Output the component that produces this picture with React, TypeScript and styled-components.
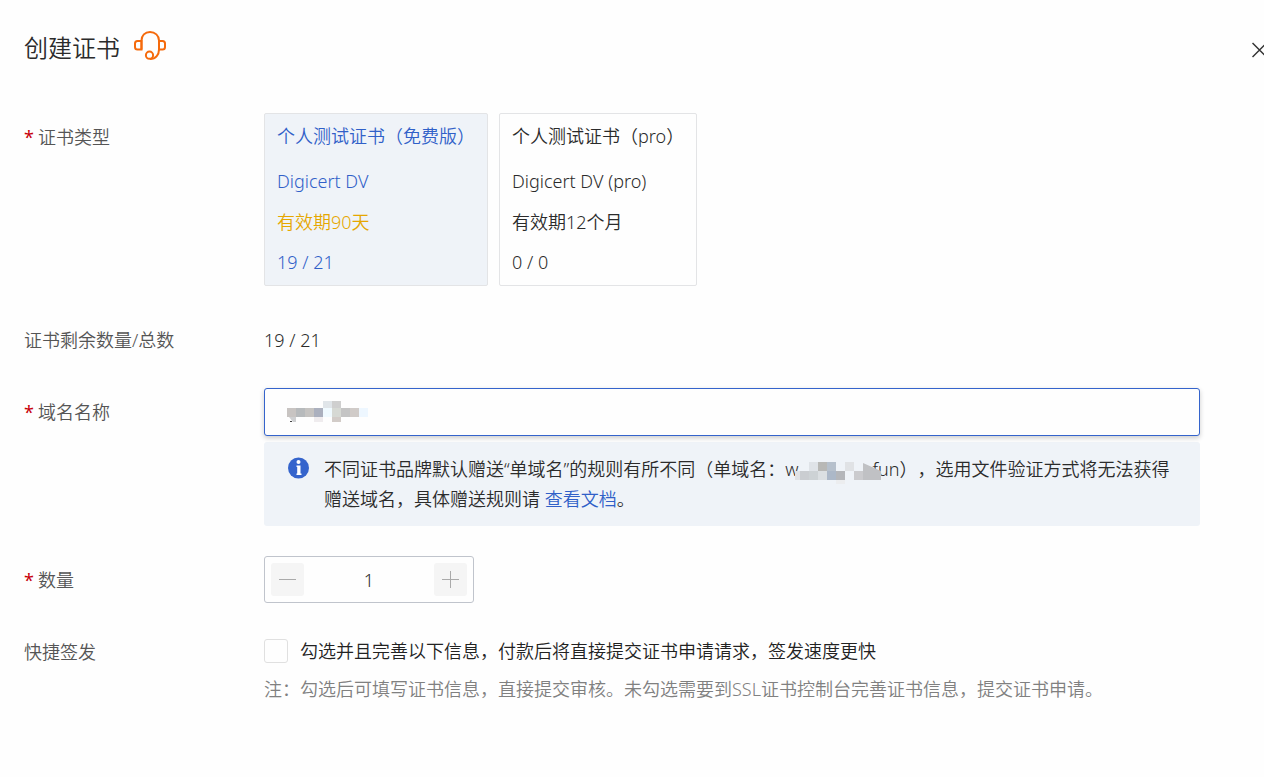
import React, { useState } from 'react';
import styled, { createGlobalStyle } from 'styled-components';

const GlobalStyle = createGlobalStyle`
  *, *::before, *::after { box-sizing: border-box; }
  body {
    margin: 0;
    background: #fefefe;
    color: #2b2b2b;
    font-family: "Noto Sans", "Noto Sans CJK SC", sans-serif;
    font-size: 18px;
    line-height: 30px;
    text-spacing-trim: space-all;
    overflow-x: hidden;
  }
  button, input { font: inherit; color: inherit; }
`;

const Drawer = styled.main`
  padding: 30px 0 64px 24px;
  font-weight: 350;
`;

const Header = styled.header`
  display: flex;
  align-items: center;
  gap: 13px;
  height: 36px;
  margin-bottom: 47px;
`;

const Title = styled.h1`
  margin: 0;
  font-size: 24px;
  font-weight: 350;
  line-height: 36px;
`;

const IconButton = styled.button`
  display: flex;
  padding: 0;
  border: 0;
  background: none;
  cursor: pointer;
`;

const SupportButton = styled(IconButton)`
  padding-bottom: 4px;
`;

const CloseButton = styled(IconButton)`
  width: 12px;
  margin-left: auto;
  padding-top: 4px;
  overflow: hidden;
  svg { flex: none; }
`;

const Form = styled.form`
  display: flex;
  flex-direction: column;
  padding-right: 64px;
`;

const Row = styled.div<{ $gap?: number }>`
  display: grid;
  grid-template-columns: 240px minmax(0, 1fr);
  align-items: start;
  margin-bottom: ${(p) => p.$gap ?? 30}px;
`;

const Label = styled.label<{ $top?: number }>`
  display: flex;
  gap: 4px;
  padding-top: ${(p) => p.$top ?? 0}px;
  color: #555;
`;

const Required = styled.span`
  color: #c8000a;
  font-weight: 400;
`;

const Cards = styled.div`
  display: flex;
  flex-wrap: wrap;
  gap: 11px;
`;

const Card = styled.button<{ $selected?: boolean }>`
  display: flex;
  flex-direction: column;
  gap: 10px;
  min-width: 197px;
  padding: 7px 12px 8px;
  border: 1px solid #e3e4e6;
  border-radius: 2px;
  background: ${(p) => (p.$selected ? '#eff3f8' : '#fefefe')};
  color: ${(p) => (p.$selected ? '#3060c8' : '#2b2b2b')};
  font-weight: 350;
  text-align: left;
  cursor: pointer;
`;

const CardTitle = styled.span`
  margin-bottom: 5px;
`;

const Validity = styled.span<{ $highlight?: boolean }>`
  margin-top: 1px;
  color: ${(p) => (p.$highlight ? '#e6a700' : 'inherit')};
`;

const DomainBox = styled.div`
  position: relative;
  height: 48px;
`;

const DomainInput = styled.input`
  display: block;
  width: 100%;
  height: 48px;
  padding: 0 22px;
  border: 1px solid #3564cc;
  border-radius: 3px;
  background: #fefefe;
  box-shadow: 0 2px 5px rgba(0, 0, 0, 0.2);
  outline: none;
`;

const DomainMask = styled.svg`
  position: absolute;
  top: 13px;
  left: 23px;
  pointer-events: none;
`;

const Notice = styled.div`
  display: flex;
  gap: 14px;
  margin-top: 6px;
  padding: 12px 24px;
  border-radius: 3px;
  background: #eff3f8;
  svg { flex: none; }
  p { margin: 0; }
`;

const InlineMask = styled.svg`
  position: relative;
  height: 30px;
  margin: 0 -9px 0 -3px;
  vertical-align: top;
`;

const DocLink = styled.a`
  color: #3060c8;
  text-decoration: none;
`;

const Stepper = styled.div`
  display: flex;
  align-items: center;
  width: 210px;
  height: 47px;
  padding: 0 6px;
  border: 1px solid #c0c4cc;
  border-radius: 3px;
`;

const StepButton = styled.button`
  display: flex;
  align-items: center;
  justify-content: center;
  flex: none;
  width: 33px;
  height: 33px;
  padding: 0;
  border: 0;
  border-radius: 3px;
  background: #f5f5f5;
  cursor: pointer;
`;

const StepInput = styled.input`
  flex: 1;
  min-width: 0;
  padding: 0;
  border: 0;
  background: none;
  text-align: center;
  outline: none;
`;

const CheckLabel = styled.label`
  display: flex;
  align-items: center;
  gap: 12px;
  color: #222;
`;

const Checkbox = styled.input`
  appearance: none;
  width: 24px;
  height: 24px;
  margin: 0;
  border: 1px solid #e0e0e0;
  border-radius: 3px;
  background: #fefefe;
  &:checked { background: #3564cc; }
`;

const Note = styled.p`
  margin: 8px 0 0;
  color: #808080;
`;

type Cell = [x: number, y: number, w: number, h: number, fill: string];

const domainCells: Cell[] = [
  [36, 0, 9, 7, '#e0e5e9'], [45, 0, 9, 7, '#cfcfcf'],
  [0, 7, 9, 9, '#c8c4c2'], [9, 7, 9, 9, '#b7babc'], [18, 7, 9, 9, '#c5c3c1'],
  [27, 7, 9, 9, '#abb0be'], [36, 7, 9, 9, '#f0faff'], [45, 7, 9, 9, '#d6d9d4'],
  [54, 7, 9, 9, '#c4c4c4'], [63, 7, 9, 9, '#d0cbc8'], [72, 7, 9, 9, '#eef7ff'],
  [27, 16, 9, 5, '#efecee'], [45, 16, 9, 5, '#d2ccc8'],
];

const siteCells: Cell[] = [
  [5, 8, 63, 18, '#eff3f8'],
  [14, 8, 9, 9, '#dfe3e8'], [23, 8, 9, 9, '#b8b8b6'], [32, 8, 9, 9, '#b6c0cc'],
  [50, 8, 9, 9, '#e0e2e5'],
  [0, 17, 5, 9, '#e0e2e5'], [5, 17, 9, 9, '#cacdd1'], [14, 17, 9, 9, '#cdd2d5'],
  [23, 17, 9, 9, '#dbdfe2'], [32, 17, 9, 9, '#acb8c8'], [41, 17, 9, 9, '#b4b6ba'],
  [59, 17, 9, 9, '#cbcbce'], [68, 17, 18, 9, '#c0c1c4'], [41, 26, 9, 4, '#ecedef'],
];

const Cells = ({ cells }: { cells: Cell[] }) => (
  <>
    {cells.map(([x, y, w, h, fill]) => (
      <rect key={`${x}-${y}-${w}`} x={x} y={y} width={w} height={h} fill={fill} shapeRendering="crispEdges" />
    ))}
  </>
);

const Star = () => <Required aria-hidden="true">*</Required>;

export default function App() {
  const [type, setType] = useState('free');
  const [count, setCount] = useState(1);

  return (
    <>
      <GlobalStyle />
      <Drawer>
        <Header>
          <Title>创建证书</Title>
          <SupportButton type="button" aria-label="客服">
            <svg width="34" height="34" viewBox="0 0 34 34" fill="none" stroke="#f56a0c" strokeWidth="2">
              <path d="M8.500 20.500V11.500C8.500 6.500 12 3 17 3s9 3.500 9 8.500v9c0 5-3 9.500-9 9.500" />
              <path d="M8.500 12H4.500C2.800 12 2 13 2 14.500v3.500c0 1.500.8 2.500 2.500 2.500h4z" />
              <path d="M26 12h3.500c1.700 0 2.500 1 2.500 2.500v3.500c0 1.500-.8 2.500-2.500 2.500H26z" />
              <circle cx="16.500" cy="26.200" r="3.600" />
            </svg>
          </SupportButton>
          <CloseButton type="button" aria-label="关闭">
            <svg width="15" height="16" viewBox="0 0 15 16" fill="none" stroke="#333" strokeWidth="1.500">
              <path d="M.5 1l14 14M14.500 1l-14 14" />
            </svg>
          </CloseButton>
        </Header>

        <Form onSubmit={(e) => e.preventDefault()}>
          <Row $gap={39}>
            <Label as="div" $top={9}><Star />证书类型</Label>
            <Cards>
              <Card type="button" $selected={type === 'free'} onClick={() => setType('free')}>
                <CardTitle>个人测试证书（免费版）</CardTitle>
                <span>Digicert DV</span>
                <Validity $highlight>有效期90天</Validity>
                <span>19 / 21</span>
              </Card>
              <Card type="button" $selected={type === 'pro'} onClick={() => setType('pro')}>
                <CardTitle>个人测试证书（pro）</CardTitle>
                <span>Digicert DV (pro)</span>
                <Validity>有效期12个月</Validity>
                <span>0 / 0</span>
              </Card>
            </Cards>
          </Row>

          <Row $gap={33}>
            <Label as="div">证书剩余数量/总数</Label>
            <span>19 / 21</span>
          </Row>

          <Row>
            <Label htmlFor="domain" $top={9}><Star />域名名称</Label>
            <div>
              <DomainBox>
                <DomainInput id="domain" type="text" />
                <DomainMask width="81" height="21" viewBox="0 0 81 21" aria-hidden="true">
                  <Cells cells={domainCells} />
                  <path d="M2 16h7v5H6z" fill="#cfd0d2" />
                  <path d="M3 20h2v1H3z" fill="#444" />
                </DomainMask>
              </DomainBox>
              <Notice>
                <svg width="22" height="30" viewBox="0 0 22 30" aria-hidden="true">
                  <circle cx="10.500" cy="14" r="10.500" fill="#3564cc" />
                  <circle cx="10.500" cy="8" r="2" fill="#fff" />
                  <path d="M8.500 11.500h4v8h1V21h-5v-1.500h.7V13h-.7z" fill="#fff" />
                </svg>
                <p>
                  不同证书品牌默认赠送“单域名”的规则有所不同（单域名：w
                  <InlineMask width="86" viewBox="0 0 86 30" aria-hidden="true">
                    <Cells cells={siteCells} />
                    <path d="M68 9l18 8H68z" fill="#c0c1c4" />
                  </InlineMask>
                  fun），选用文件验证方式将无法获得赠送域名，具体赠送规则请 <DocLink href="#docs">查看文档</DocLink>。
                </p>
              </Notice>
            </div>
          </Row>

          <Row $gap={33}>
            <Label htmlFor="count" $top={9}><Star />数量</Label>
            <Stepper>
              <StepButton type="button" aria-label="减少" onClick={() => setCount(Math.max(1, count - 1))}>
                <svg width="17" height="17" stroke="#aaa"><path d="M0 8.500h17" /></svg>
              </StepButton>
              <StepInput
                id="count"
                type="text"
                inputMode="numeric"
                value={count}
                onChange={(e) => setCount(Number(e.target.value) || 1)}
              />
              <StepButton type="button" aria-label="增加" onClick={() => setCount(count + 1)}>
                <svg width="17" height="17" stroke="#aaa"><path d="M0 8.500h17M8.500 0v17" /></svg>
              </StepButton>
            </Stepper>
          </Row>

          <Row $gap={0}>
            <Label as="div" $top={1}>快捷签发</Label>
            <div>
              <CheckLabel>
                <Checkbox type="checkbox" />
                勾选并且完善以下信息，付款后将直接提交证书申请请求，签发速度更快
              </CheckLabel>
              <Note>注：勾选后可填写证书信息，直接提交审核。未勾选需要到SSL证书控制台完善证书信息，提交证书申请。</Note>
            </div>
          </Row>
        </Form>
      </Drawer>
    </>
  );
}
